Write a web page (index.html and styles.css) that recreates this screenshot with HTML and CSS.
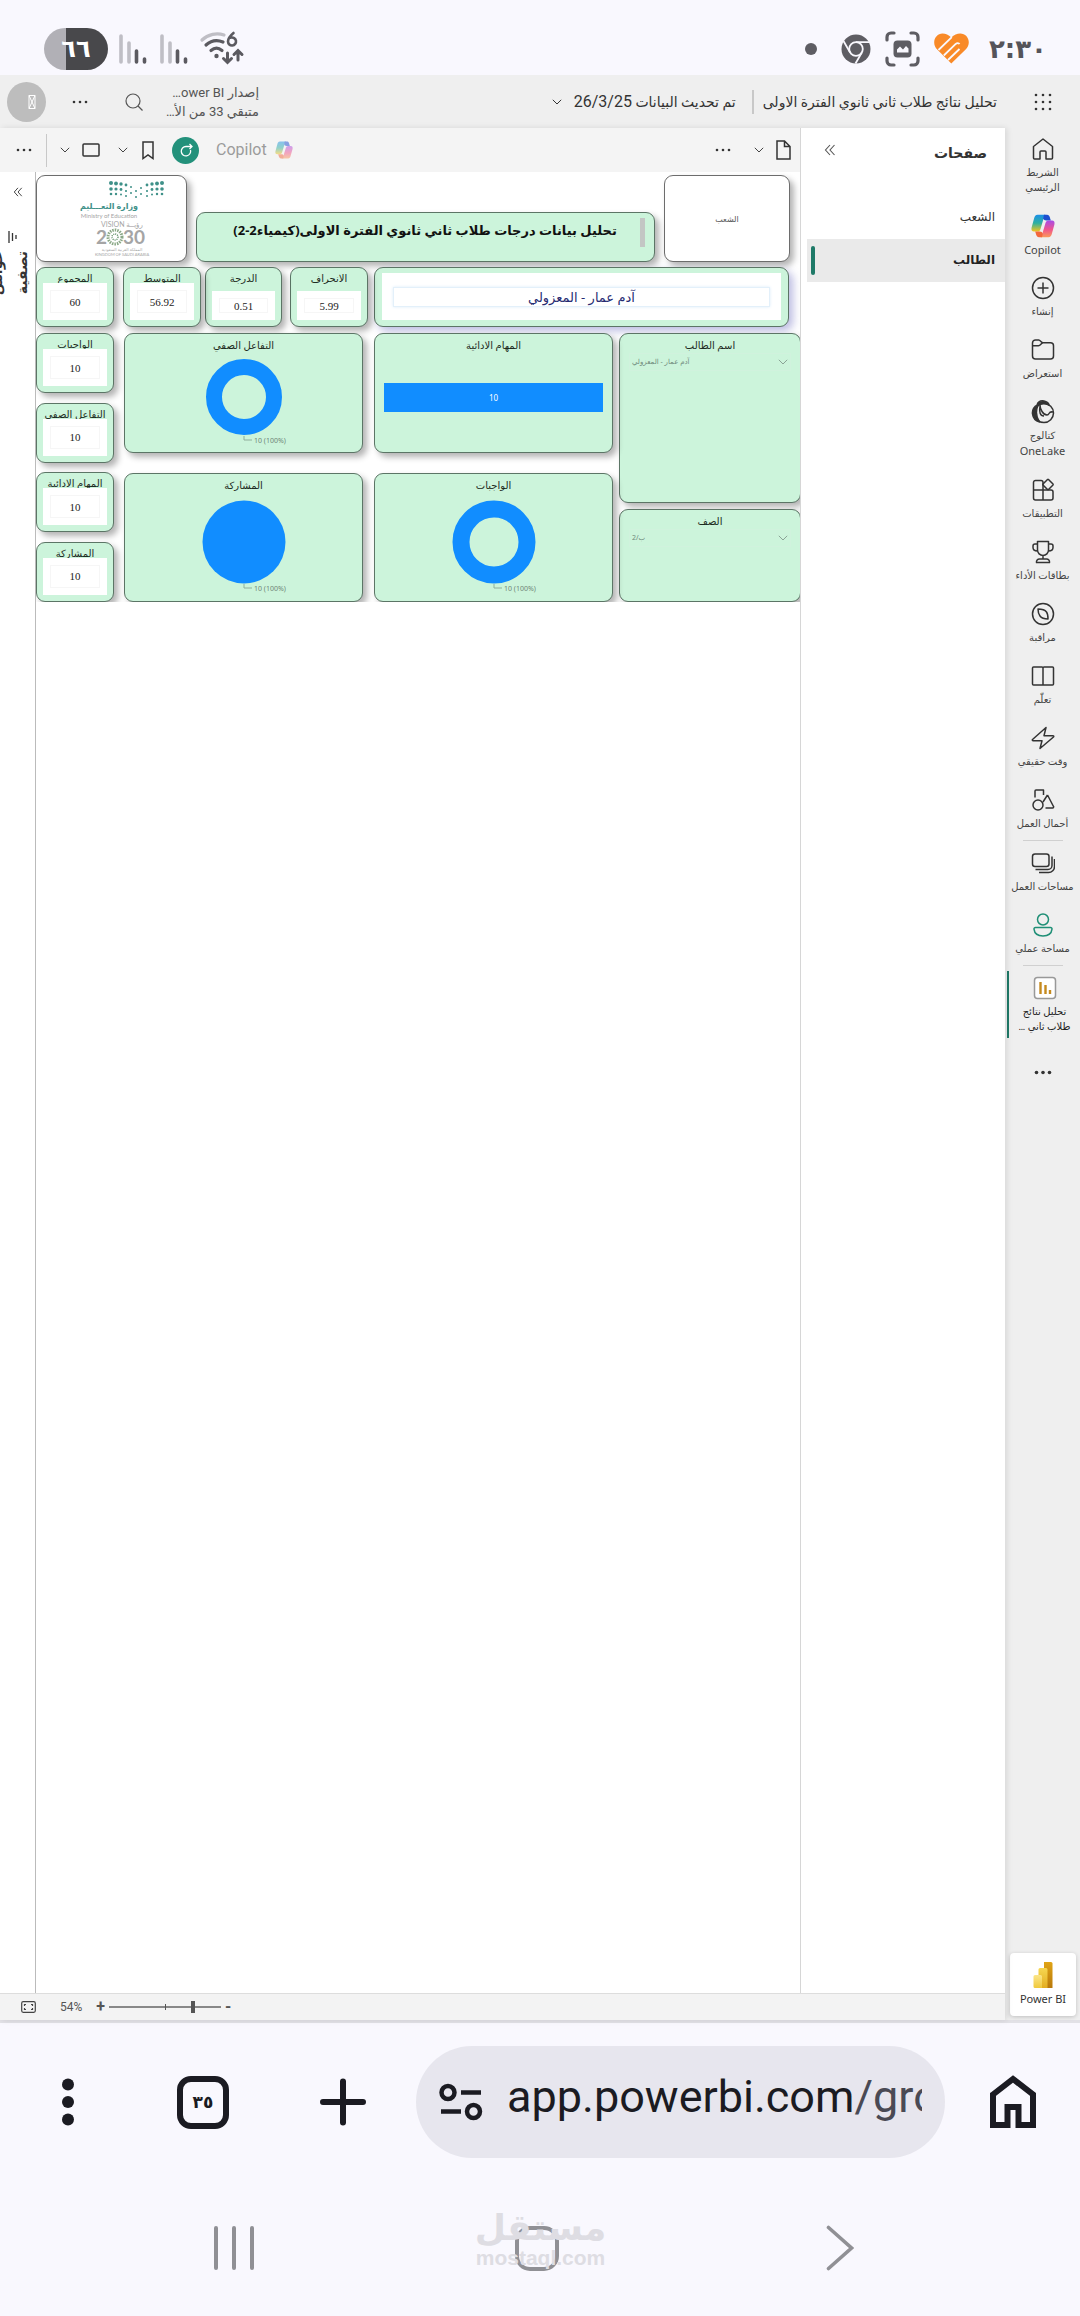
FILE: index.html
```html
<!DOCTYPE html>
<html lang="ar" dir="rtl">
<head>
<meta charset="utf-8">
<meta name="viewport" content="width=device-width, initial-scale=1">
<title>تحليل نتائج طلاب ثاني ثانوي الفترة الاولى - Power BI</title>
<link rel="stylesheet" href="styles.css">
</head>
<body>
<svg class="defs" aria-hidden="true">
  <defs>
    <linearGradient id="cpA" x1="0" y1="0" x2="0" y2="1"><stop offset="0" stop-color="#1b8fe8"/><stop offset=".5" stop-color="#2fb0a0"/><stop offset="1" stop-color="#f5c51c"/></linearGradient>
    <linearGradient id="cpB" x1="0" y1="0" x2="0" y2="1"><stop offset="0" stop-color="#a74be8"/><stop offset=".55" stop-color="#f0568c"/><stop offset="1" stop-color="#fb9a5a"/></linearGradient>
    <linearGradient id="pb1" x1="0" y1="0" x2="0" y2="1"><stop offset="0" stop-color="#e0a416"/><stop offset="1" stop-color="#b8780a"/></linearGradient>
    <linearGradient id="pb2" x1="0" y1="0" x2="0" y2="1"><stop offset="0" stop-color="#f6d751"/><stop offset="1" stop-color="#e3ad20"/></linearGradient>
    <linearGradient id="pb3" x1="0" y1="0" x2="0" y2="1"><stop offset="0" stop-color="#fbe589"/><stop offset="1" stop-color="#f0c93c"/></linearGradient>
    <symbol id="copilot" viewBox="0 0 24 24">
      <path d="M14 .8H6.5C4.600.8 3.700 2.200 3.200 4L.6 13.500C0 16 1 17.500 3 17.500h3.500c1.700 0 2.500-1 3-2.600L12.600 4.600c.6-2 1-3 3.200-3z" fill="url(#cpA)"/>
      <path d="M13 .8h3c1.600 0 2.300.9 2.800 2.400l1 3.300h-4.500c-1.700 0-2.600-.7-3.100-2.200z" fill="#1d4fd0"/>
      <path d="M10 23.200h7.500c1.900 0 2.800-1.400 3.300-3.200l2.600-9.500c.6-2.500-.4-4-2.400-4h-3.500c-1.700 0-2.500 1-3 2.600l-3.100 10.300c-.6 2-1 3-3.200 3z" fill="url(#cpB)"/>
      <path d="M11 23.200H8c-1.600 0-2.300-.9-2.800-2.400l-1-3.300h4.500c1.700 0 2.600.7 3.100 2.200z" fill="#f2683c"/>
    </symbol>
    <symbol id="chev" viewBox="0 0 10 6"><path d="M.8.8 5 5 9.200.8" fill="none" stroke="currentColor" stroke-width="1"/></symbol>
    <symbol id="more" viewBox="0 0 16 4"><circle cx="2" cy="2" r="1.300"/><circle cx="8" cy="2" r="1.300"/><circle cx="14" cy="2" r="1.300"/></symbol>
    <symbol id="bars" viewBox="0 0 28 32"><g fill="none" stroke-linecap="round" stroke-width="3.600"><path d="M2 3v26M10 10v19" stroke="#bfbec5"/><path d="M17.500 18v11M25.500 26v3" stroke="#5b5a60"/></g></symbol>
    <symbol id="dbl" viewBox="0 0 12 12"><path d="M6 1 1.500 6 6 11M10.500 1 6 6l4.500 5" fill="none" stroke="currentColor" stroke-width="1.100"/></symbol>
  </defs>
</svg>

<header class="status" dir="ltr">
  <div class="status-side">
    <span class="battery">٦٦</span>
    <svg width="28" height="32" class="sig1"><use href="#bars"/></svg>
    <svg width="28" height="32" class="sig2"><use href="#bars"/></svg>
    <svg width="46" height="36" viewBox="0 0 46 36" fill="none" stroke-linecap="round" stroke-width="3.200">
      <path d="M3 9C9 3 18 1.500 25 4" stroke="#bfbec5"/>
      <path d="M7 14c5-4.500 11-5.500 17-3M12 19.500c3.500-3 7.500-3 11 0" stroke="#5b5a60"/>
      <circle cx="17.500" cy="25" r="2.200" fill="#5b5a60"/>
      <path d="M28.500 22v9m-4-3.500 4 4 4-4M39 29v-9m-4 3.500 4-4 4 4" stroke="#5b5a60" stroke-width="3"/>
      <path d="M34.500 2c-3 2.500-5.500 5.500-5.500 8.500a4 4 0 1 0 3-3.900" stroke="#5b5a60" stroke-width="2.600"/>
    </svg>
  </div>
  <div class="status-side status-right">
    <span class="dot"></span>
    <svg width="30" height="30" viewBox="0 0 30 30"><circle cx="15" cy="15" r="14.500" fill="#5e5d63"/><g fill="none" stroke="#f9f8fe" stroke-width="1.800"><circle cx="15" cy="15" r="6.800"/><path d="M15 8.200h13.500M9 18.400 2.500 7M20.800 18.600 14.500 29.500"/></g></svg>
    <svg width="35" height="36" viewBox="0 0 35 36" fill="none" stroke="#5e5d63" stroke-width="3.200" stroke-linecap="round"><path d="M2 9V6a4 4 0 0 1 4-4h3M26 2h3a4 4 0 0 1 4 4v3M33 27v3a4 4 0 0 1-4 4h-3M9 34H6a4 4 0 0 1-4-4v-3"/><rect x="8.500" y="9.500" width="18" height="17" rx="4" fill="#5e5d63" stroke="none"/><path d="M12 21.500v-3l3-3 3 3 3-3.500 2.500 2.500v4z" fill="#f9f8fe" stroke="none"/></svg>
    <svg width="35" height="31" viewBox="0 0 35 31">
      <path d="M8.500.5c3.300 0 6 1.300 8.800 4C20 1.800 23 .5 26.200.5c5 0 8.600 4 8.600 8.800 0 3-1.200 5.200-3.200 7.200L17.300 30.500 3.200 16.500C1.200 14.500.2 12.300.2 9.500.2 4.500 3.800.5 8.500.5z" fill="#f98a28"/>
      <path d="M4.500 17 17.800 4.200M9.800 22.500 21.500 11.200c1.600-1.500 3.200-1.500 4 0M14 27 25.500 16" fill="none" stroke="#f9f8fe" stroke-width="1.800"/>
    </svg>
    <time class="clock">٢:٣٠</time>
  </div>
</header>

<div class="app">
  <header class="topbar">
    <button class="waffle" aria-label="التطبيقات"><svg width="18" height="18" viewBox="0 0 18 18" fill="#333"><circle cx="2" cy="2" r="1.300"/><circle cx="9" cy="2" r="1.300"/><circle cx="16" cy="2" r="1.300"/><circle cx="2" cy="9" r="1.300"/><circle cx="9" cy="9" r="1.300"/><circle cx="16" cy="9" r="1.300"/><circle cx="2" cy="16" r="1.300"/><circle cx="9" cy="16" r="1.300"/><circle cx="16" cy="16" r="1.300"/></svg></button>
    <h1 class="doc-title">تحليل نتائج طلاب ثاني ثانوي الفترة الاولى</h1>
    <span class="vr"></span>
    <button class="updated"><span>تم تحديث البيانات <bdi>26/3/25</bdi></span><svg width="10" height="6"><use href="#chev"/></svg></button>
    <p class="trial">إصدار ower BI…<br>متبقي 33 من الأ…</p>
    <button class="search" aria-label="بحث"><svg width="18" height="18" viewBox="0 0 18 18" fill="none" stroke="#555" stroke-width="1.200"><circle cx="8" cy="8" r="7"/><path d="m13 13 4.500 4.500"/></svg></button>
    <button class="top-more" aria-label="المزيد"><svg width="16" height="4" fill="#333"><use href="#more"/></svg></button>
    <button class="avatar" aria-label="الحساب"><svg width="8" height="14" viewBox="0 0 8 14" fill="none" stroke="#fff" stroke-width="1"><path d="M1 .5h6v13H1zM1 .5l6 13M7 .5l-6 13"/></svg></button>
  </header>

  <div class="shell">
    <nav class="rail">
      <a href="#" class="item"><svg viewBox="0 0 24 24"><path d="M2.500 9.500 12 2l9.500 7.500V21a1 1 0 0 1-1 1H15v-7a1 1 0 0 0-1-1h-4a1 1 0 0 0-1 1v7H3.500a1 1 0 0 1-1-1z"/></svg>الشريط<br>الرئيسي</a>
      <a href="#" class="item latin"><svg viewBox="0 0 24 24" class="plain"><use href="#copilot"/></svg>Copilot</a>
      <a href="#" class="item"><svg viewBox="0 0 24 24"><circle cx="12" cy="12" r="10.500"/><path d="M12 6.500v11M6.500 12h11"/></svg>إنشاء</a>
      <a href="#" class="item"><svg viewBox="0 0 24 24"><path d="M1.500 7.500V5a3 3 0 0 1 3-3h3.200c1.600 0 2.800 2.800 4.300 2.800h7.500a3 3 0 0 1 3 3V18a3 3 0 0 1-3 3h-15a3 3 0 0 1-3-3z"/><path d="M1.500 7.800h6c2 0 2.700-3 4.500-3"/></svg>استعراض</a>
      <a href="#" class="item"><svg viewBox="0 0 24 24"><circle cx="13" cy="13" r="9.500"/><path d="M7 5C3 6 1 10 1.500 14s3 7 7 8C5 17 5 10 7 5zM6 5c1-3 4-4.500 7-4s5 2.500 5 4c-4-2-8-2-12 0z" fill="#333"/><path d="M9 5c0 4 3 10 7 10 3 0 1-4 6-3M9 6c-1 6 0 10 4 10"/></svg>كتالوج<br><span class="latin">OneLake</span></a>
      <a href="#" class="item"><svg viewBox="0 0 24 24"><path d="M12 12V4.500a2 2 0 0 0-2-2H4.500a2 2 0 0 0-2 2V20a2 2 0 0 0 2 2H20a2 2 0 0 0 2-2v-6a2 2 0 0 0-2-2zM2.500 12H12v10"/><path d="m17.500 1.500 4.500 4.500a.8.800 0 0 1 0 1l-4.500 4.500a.8.800 0 0 1-1 0L12 7a.8.800 0 0 1 0-1l4.500-4.500a.8.800 0 0 1 1 0z"/></svg>التطبيقات</a>
      <a href="#" class="item"><svg viewBox="0 0 24 24"><path d="M6.500 1.500h11V10a5.500 5.500 0 0 1-11 0zM6.500 4H4a2 2 0 0 0-2 2v1.500C2 10 4 11 6.500 11M17.500 4H20a2 2 0 0 1 2 2v1.500c0 2.500-2 3.500-4.500 3.500M12 15.500V19M8.500 19h7a3 3 0 0 1 3 3.500h-13a3 3 0 0 1 3-3.500z"/></svg>بطاقات الأداء</a>
      <a href="#" class="item"><svg viewBox="0 0 24 24"><circle cx="12" cy="12" r="10.500"/><path d="M7 7c4 0 7 1 8.500 3S17 14 17 17c-4 0-6.500-1-8-3S7 10 7 7z"/></svg>مراقبة</a>
      <a href="#" class="item"><svg viewBox="0 0 24 24"><path d="M12 4v17M12 4a1 1 0 0 0-1-1H2.500a1 1 0 0 0-1 1v16a1 1 0 0 0 1 1h19a1 1 0 0 0 1-1V4a1 1 0 0 0-1-1H13a1 1 0 0 0-1 1z"/></svg>تعلّم</a>
      <a href="#" class="item"><svg viewBox="0 0 24 24"><path d="M15 1.500 1.500 13.500c-.5.500 0 1.200.6 1.200H11L9 22.500 22.500 11c.6-.6.200-1.300-.6-1.300H13z"/></svg>وقت حقيقي</a>
      <a href="#" class="item"><svg viewBox="0 0 24 24"><circle cx="7" cy="17" r="5"/><path d="M4 9.500V3a1 1 0 0 1 1-1h7.500v5M16.500 7l6 11.500a1 1 0 0 1-.8 1.500h-7.200M16.500 7 12 14"/></svg>أحمال العمل</a>
      <hr>
      <a href="#" class="item"><svg viewBox="0 0 24 24"><rect x="1.500" y="3" width="16.500" height="12.500" rx="2.500"/><path d="M4.500 18.500H17a4 4 0 0 0 4-4V5.500M8 21.500h9.500a6 6 0 0 0 6-6V8"/></svg>مساحات العمل</a>
      <a href="#" class="item"><svg viewBox="0 0 24 24" class="green"><circle cx="12" cy="6.500" r="5.500"/><path d="M4.500 14.500h15a1.500 1.500 0 0 1 1.500 1.700C20.500 20.500 17 23 12 23s-8.500-2.500-9-6.800a1.500 1.500 0 0 1 1.500-1.700z"/></svg>مساحة عملي</a>
      <hr>
      <a href="#" class="item current"><svg viewBox="0 0 24 24" class="plain"><rect x="1.500" y="1.500" width="21" height="21" rx="3" fill="#fff" stroke="#999"/><path d="M7.500 6v12M12.500 9v9M17 14v4" stroke="#c58a1e" stroke-width="2.400" fill="none"/></svg>تحليل نتائج<br>طلاب ثاني …</a>
      <button class="rail-more" aria-label="المزيد"><svg width="18" height="5" fill="#333" viewBox="0 0 18 5"><circle cx="2.500" cy="2.500" r="1.800"/><circle cx="9" cy="2.500" r="1.800"/><circle cx="15.500" cy="2.500" r="1.800"/></svg></button>
      <a href="#" class="product"><svg width="22" height="28" viewBox="0 0 22 28"><path d="M12 1h7a1.500 1.500 0 0 1 1.500 1.500V27H12z" fill="url(#pb1)"/><path d="M6.500 8.500A1.500 1.500 0 0 1 8 7h6a1.500 1.500 0 0 1 1.500 1.500V27h-9z" fill="url(#pb2)"/><path d="M1.500 15.500A1.500 1.500 0 0 1 3 14h5.500a1.500 1.500 0 0 1 1.500 1.500V27H3a1.500 1.500 0 0 1-1.500-1.500z" fill="url(#pb3)"/></svg>Power BI</a>
    </nav>

    <div class="work">
      <div class="work-row">
        <aside class="pages">
          <div class="pages-head"><h2>صفحات</h2><button aria-label="طي"><svg width="12" height="12"><use href="#dbl"/></svg></button></div>
          <a href="#" class="page-link">الشعب</a>
          <a href="#" class="page-link selected">الطالب</a>
        </aside>

        <div class="stage">
          <div class="toolbar">
            <button class="t-file" aria-label="ملف"><svg width="15" height="20" viewBox="0 0 15 20" fill="none" stroke="#333" stroke-width="1.500"><path d="M1 1h7.500L14 6.500V19H1zM8.500 1v5.500H14"/></svg><svg width="10" height="6"><use href="#chev"/></svg></button>
            <button class="t-more" aria-label="المزيد"><svg width="16" height="4" fill="#333"><use href="#more"/></svg></button>
            <button class="t-copilot"><svg width="18" height="18"><use href="#copilot"/></svg>Copilot</button>
            <button class="t-reset" aria-label="إعادة تعيين"><svg width="14" height="14" viewBox="0 0 14 14" fill="none" stroke="#fff" stroke-width="1.300"><path d="M13 3.500H7A4.700 4.700 0 1 0 11.500 7M10.500 1 13 3.500 10.500 6"/></svg></button>
            <button class="t-mark" aria-label="إشارات مرجعية"><svg width="12" height="19" viewBox="0 0 12 19" fill="none" stroke="#333" stroke-width="1.500"><path d="M1 1h10v16.500L6 14l-5 3.500z"/></svg><svg width="10" height="6"><use href="#chev"/></svg></button>
            <button class="t-view" aria-label="عرض"><svg width="18" height="14" viewBox="0 0 18 14" fill="none" stroke="#333" stroke-width="1.500"><rect x="1" y="1" width="16" height="12" rx="1"/></svg><svg width="10" height="6"><use href="#chev"/></svg></button>
            <span class="vr"></span>
            <button class="t-last" aria-label="المزيد"><svg width="16" height="4" fill="#333"><use href="#more"/></svg></button>
          </div>

          <div class="canvas-row">
            <main class="canvas">
              <div class="report">
                <div class="row-top">
                  <button class="card white nav-card">الشعب</button>
                  <div class="card title-card"><span class="thumb"></span><h2>تحليل بيانات درجات طلاب ثاني ثانوي الفترة الاولى(كيمياء2-2)</h2></div>
                  <div class="card white logo-card">
                    <svg viewBox="0 0 151 87" width="151" height="87" direction="ltr">
                      <g fill="#3f9189">
                        <circle cx="75" cy="7" r="2"/><circle cx="80" cy="7.500" r="1.900"/><circle cx="85" cy="8" r="1.700"/><circle cx="90" cy="9" r="1.400"/><circle cx="95" cy="11" r="1"/><circle cx="75" cy="13" r="1.800"/><circle cx="80" cy="13" r="1.600"/><circle cx="85" cy="13.500" r="1.400"/><circle cx="90" cy="15" r="1.100"/><circle cx="95" cy="17" r="1"/><circle cx="75" cy="18" r="1.300"/><circle cx="80" cy="18" r="1.200"/><circle cx="85" cy="18.500" r="1"/><circle cx="90" cy="20" r="1"/><circle cx="100" cy="15" r="1"/><circle cx="100" cy="21" r="1"/>
                        <circle cx="126" cy="7" r="2"/><circle cx="121" cy="7.500" r="1.900"/><circle cx="116" cy="8" r="1.700"/><circle cx="111" cy="9" r="1.400"/><circle cx="105" cy="12" r="1"/><circle cx="126" cy="13" r="1.800"/><circle cx="121" cy="13" r="1.600"/><circle cx="116" cy="13.500" r="1.400"/><circle cx="111" cy="15" r="1.100"/><circle cx="105" cy="18" r="1"/><circle cx="126" cy="18" r="1.300"/><circle cx="121" cy="18" r="1.200"/><circle cx="116" cy="18.500" r="1"/><circle cx="111" cy="20" r="1"/>
                      </g>
                      <text x="73" y="33" class="lg-ar">وزارة التعـــليم</text>
                      <text x="73" y="42" class="lg-en">Ministry of Education</text>
                      <text x="86" y="51" class="lg-vis">VISION رؤيــة</text>
                      <text x="60" y="68" class="lg-num">2</text>
                      <text x="87" y="68" class="lg-num">30</text>
                      <circle cx="79" cy="61" r="7" fill="none" stroke="#8aa886" stroke-width="3" stroke-dasharray="1.500 1"/>
                      <circle cx="79" cy="61" r="3" fill="none" stroke="#5f8f66" stroke-width="1.400" stroke-dasharray="1 1"/>
                      <text x="86" y="75" class="lg-tiny">المملكة العربية السعودية</text>
                      <text x="86" y="80" class="lg-tiny">KINGDOM OF SAUDI ARABIA</text>
                    </svg>
                  </div>
                </div>

                <div class="row-kpi">
                  <div class="card name-card"><div class="name-box"><span>آدم عمار - المعزولي</span></div></div>
                  <div class="card kpi low dev"><h3>الانحراف</h3><div><span>5.99</span></div></div>
                  <div class="card kpi low deg"><h3>الدرجة</h3><div><span>0.51</span></div></div>
                  <div class="card kpi avg"><h3>المتوسط</h3><div><span>56.92</span></div></div>
                  <div class="card kpi sum"><h3>المجموع</h3><div><span>60</span></div></div>
                </div>

                <div class="row-body">
                  <div class="col slicers">
                    <div class="card slicer student"><label for="student">اسم الطالب</label><div class="pick"><select id="student"><option>آدم عمار - المعزولي</option></select><svg width="10" height="6"><use href="#chev"/></svg></div></div>
                    <div class="card slicer"><label for="klass">الصف</label><div class="pick"><select id="klass"><option>ب/2</option></select><svg width="10" height="6"><use href="#chev"/></svg></div></div>
                  </div>
                  <div class="col charts mid">
                    <div class="card chart"><h3>المهام الادائية</h3><div class="bar">10</div></div>
                    <div class="card chart tall"><h3>الواجبات</h3>
                      <svg width="84" height="96" viewBox="0 0 84 96"><circle cx="42" cy="42" r="33" fill="none" stroke="#118dff" stroke-width="17"/><path d="M42 84v4h8" class="lead"/><text x="52" y="91">10 (100%)</text></svg></div>
                  </div>
                  <div class="col charts far">
                    <div class="card chart"><h3>التفاعل الصفي</h3>
                      <svg width="76" height="88" viewBox="0 0 76 88"><circle cx="38" cy="38" r="30" fill="none" stroke="#118dff" stroke-width="16"/><path d="M38 77v4h8" class="lead"/><text x="48" y="84">10 (100%)</text></svg></div>
                    <div class="card chart tall"><h3>المشاركة</h3>
                      <svg width="84" height="96" viewBox="0 0 84 96"><circle cx="42" cy="42" r="41.500" fill="#118dff"/><path d="M42 84v4h8" class="lead"/><text x="52" y="91">10 (100%)</text></svg></div>
                  </div>
                  <div class="col kpis">
                    <div class="card kpi"><h3>الواجبات</h3><div><span>10</span></div></div>
                    <div class="card kpi"><h3>التفاعل الصفي</h3><div><span>10</span></div></div>
                    <div class="card kpi"><h3>المهام الادائية</h3><div><span>10</span></div></div>
                    <div class="card kpi"><h3>المشاركة</h3><div><span>10</span></div></div>
                  </div>
                </div>
              </div>
            </main>
            <aside class="filters">
              <button aria-label="توسيع"><svg width="10" height="12" viewBox="0 0 12 12"><use href="#dbl"/></svg></button>
              <svg width="9" height="12" viewBox="0 0 9 12" fill="none" stroke="#333" stroke-width="1.300"><path d="M1 0v12M4.500 2v8M8 4v4"/></svg>
              <h2>عوامل<br>تصفية</h2>
            </aside>
          </div>
        </div>
      </div>

      <footer class="zoombar">
        <span class="minus">-</span>
        <input type="range" min="0" max="100" value="24" aria-label="تكبير">
        <span class="plus">+</span>
        <output>54%</output>
        <button aria-label="ملاءمة"><svg width="15" height="12" viewBox="0 0 15 12" fill="none" stroke="#444" stroke-width="1.200"><rect x=".7" y=".7" width="13.600" height="10.600" rx="1.500"/><path d="M3.500 5V3.500H5M10 3.500h1.500V5M11.500 7v1.500H10M5 8.500H3.500V7"/></svg></button>
      </footer>
    </div>
  </div>
</div>

<div class="browser" dir="ltr">
  <button class="b-menu" aria-label="القائمة"><svg width="12" height="48" viewBox="0 0 12 48" fill="#1b1b22"><circle cx="6" cy="6.500" r="6"/><circle cx="6" cy="24" r="6"/><circle cx="6" cy="41.500" r="6"/></svg></button>
  <button class="b-tabs">٣٥</button>
  <button class="b-new" aria-label="علامة تبويب جديدة"><svg width="46" height="48" viewBox="0 0 46 48" stroke="#1b1b22" stroke-width="6" stroke-linecap="round"><path d="M23 3.500v41M3 24h40"/></svg></button>
  <div class="url">
    <svg width="44" height="38" viewBox="0 0 44 38" fill="none" stroke="#1b1b22" stroke-width="4.500"><circle cx="9" cy="9.500" r="6.500"/><circle cx="34.500" cy="28.500" r="6.500"/><path d="M22 9.500h20M2 28.500h20"/></svg>
    <span class="url-text">app.powerbi.com<i>/groups</i></span>
  </div>
  <button class="b-home" aria-label="الصفحة الرئيسية"><svg width="46" height="54" viewBox="0 0 46 54" fill="none" stroke="#1b1b22" stroke-width="6"><path d="M3 19.500 23 4l20 15.500V50H28.500V32h-11v18H3z"/></svg></button>
</div>

<nav class="sysnav" dir="ltr">
  <button aria-label="التطبيقات الأخيرة"><svg width="40" height="44" viewBox="0 0 40 44" stroke="#909095" stroke-width="4" stroke-linecap="round"><path d="M2 2v40M20 2v40M38 2v40"/></svg></button>
  <div class="home-slot">
    <p class="mark"><b>مستقل</b><span>mostaql.com</span></p>
    <button aria-label="الشاشة الرئيسية"></button>
  </div>
  <button aria-label="رجوع"><svg width="28" height="46" viewBox="0 0 28 46" fill="none" stroke="#909095" stroke-width="3.600" stroke-linecap="round"><path d="m2.500 2.500 23 20.500-23 20.500"/></svg></button>
</nav>
</body>
</html>
```
FILE: styles.css
```css
* { box-sizing: border-box; }
body {
  margin: 0;
  min-height: 100vh;
  display: flex;
  flex-direction: column;
  background: #f9f8fe;
  color: #333;
  font: 13px/16px Roboto, "DejaVu Sans", sans-serif;
}
h1, h2, h3, p { margin: 0; font-weight: 400; }
button { margin: 0; padding: 0; border: 0; background: none; color: inherit; font: inherit; display: flex; align-items: center; justify-content: center; }
a { color: inherit; text-decoration: none; }
svg { display: block; flex: none; }
.defs { position: absolute; width: 0; height: 0; }
.vr { width: 2px; background: #c8c8c8; }
.latin { font-family: "Noto Sans", sans-serif; }

/* phone status bar */
.status { height: 75px; padding: 22px 33px 0 44px; display: flex; justify-content: space-between; }
.status-side { display: flex; align-items: center; }
.battery { width: 64px; height: 42px; border-radius: 22px; background: linear-gradient(90deg, #b1b0b6 35%, #48484b 35%); color: #fff; font: bold 24px/42px "DejaVu Sans", sans-serif; text-align: center; }
.sig1 { margin-left: 11px; }
.sig2 { margin: 0 11px 0 13px; }
.status-right { gap: 14px; }
.dot { width: 12px; height: 12px; margin-right: 10px; border-radius: 50%; background: #5e5d63; }
.clock { margin-left: 6px; color: #55545a; font: bold 26px/40px "DejaVu Sans", sans-serif; }

/* application frame */
.app { flex: 1; display: flex; flex-direction: column; background: #efefef; border-bottom: 3px solid #e2e1e6; }
.topbar { height: 53px; padding: 0 28px 0 7px; display: flex; align-items: center; }
.waffle { width: 18px; }
.doc-title { margin-right: 37px; font-size: 14px; line-height: 24px; white-space: nowrap; }
.topbar .vr { height: 24px; margin: 0 9px 0 16px; }
.updated { gap: 12px; font-size: 14px; white-space: nowrap; }
.updated bdi { font-size: 16px; }
.trial { margin-right: auto; width: 86px; font-size: 13px; line-height: 19px; color: #555; white-space: nowrap; }
.search { margin-right: 30px; }
.top-more { margin: 0 37px 0 24px; }
.top-more { margin-left: 26px; }
.avatar { width: 39px; height: 40px; border-radius: 50%; background: #bdbdbd; }
.avatar svg { margin-left: 10px; }
.shell { flex: 1; display: flex; }

/* navigation rail */
.rail { width: 75px; flex: none; padding-top: 4px; display: flex; flex-direction: column; }
.item { padding: 5px 0 14px; display: block; text-align: center; font-size: 10px; line-height: 15px; color: #444; white-space: nowrap; }
.item svg { width: 24px; height: 24px; margin: 0 auto 4px; fill: none; stroke: #333; stroke-width: 1.500; stroke-linejoin: round; }
.item svg.plain { stroke: none; }
.item svg.green { stroke: #1f8f76; }
.item.latin, .item .latin { font-size: 11px; }
.rail hr { width: 40px; height: 1px; margin: -5px auto 5px; border: 0; background: #d0d0d0; }
.current { margin-left: 2px; padding-bottom: 4px; border-left: 2px solid #1f7a68; color: #222; }
.rail-more { margin-top: 31px; height: 6px; }
.product { margin: auto 4px 4px 5px; height: 63px; padding-top: 8px; border-radius: 4px; background: #fff; box-shadow: 0 1px 4px rgba(0, 0, 0, .2); display: flex; flex-direction: column; align-items: center; gap: 1px; font: 11px/18px "Noto Sans", sans-serif; direction: ltr; }

/* work area */
.work { flex: 1; min-width: 0; display: flex; flex-direction: column; box-shadow: 2px 0 6px rgba(0, 0, 0, .1); }
.work-row { flex: 1; display: flex; background: #fff; }
.pages { width: 205px; flex: none; border-left: 1px solid #d6d6d6; }
.pages-head { height: 68px; padding: 15px 18px 0 23px; display: flex; align-items: flex-start; justify-content: space-between; }
.pages-head h2 { font-size: 14px; line-height: 20px; font-weight: 700; }
.pages-head button { margin-top: 1px; color: #555; }
.page-link { display: block; margin-left: 6px; padding: 0 10px; font-size: 12px; line-height: 43px; }
.selected { position: relative; background: #eaeaea; font-weight: 700; color: #222; }
.selected::after { content: ""; position: absolute; left: 4px; top: 7px; bottom: 7px; width: 4px; border-radius: 2px; background: #1f7a68; }
.stage { flex: 1; min-width: 0; display: flex; flex-direction: column; }
.toolbar { height: 44px; padding: 0 9px 0 16px; display: flex; align-items: center; background: #f4f4f4; color: #444; }
.toolbar button { gap: 12px; }
.t-more { margin-right: 23px; }
.t-copilot { margin-right: auto; opacity: .5; font-size: 16px; }
.toolbar .t-copilot { gap: 8px; }
.t-reset { width: 27px; height: 27px; margin: 0 17px 0 18px; border-radius: 50%; background: #23917b; }
.toolbar .t-mark { gap: 14px; }
.t-view { margin-right: 18px; }
.toolbar .vr { height: 33px; width: 1px; margin: 0 13px 0 14px; }
.canvas-row { flex: 1; display: flex; }
.canvas { flex: 1; min-width: 0; }
.filters { width: 36px; flex: none; border-right: 1px solid #bbb; overflow: hidden; display: flex; flex-direction: column; align-items: center; padding-top: 14px; }
.filters > svg { margin: 33px 0 8px 8px; align-self: flex-end; }
.filters h2 { width: 50px; flex: none; align-self: flex-start; writing-mode: vertical-rl; transform: rotate(180deg); font-size: 14px; line-height: 25px; font-weight: 700; }

/* report */
.report { padding-top: 3px; overflow: hidden; display: flex; flex-direction: column; font-family: "Noto Sans", "DejaVu Sans", sans-serif; }
.card { border: 1px solid #5c7566; border-radius: 9px; background: #ccf4db; box-shadow: 4px 4px 6px rgba(0, 0, 0, .3); min-width: 0; overflow: hidden; }
.card.white { background: #fff; border-color: #6d6d6d; }
.card h3, .slicer label { font-size: 10px; line-height: 22px; text-align: center; color: #1d2b22; white-space: nowrap; }
.row-top { display: grid; grid-template-columns: 126fr 458fr 151fr; column-gap: 9px; padding-right: 10px; height: 87px; align-items: end; }
.nav-card { height: 87px; font-size: 8px; color: #555; }
.title-card { height: 50px; padding: 5px 9px 5px 13px; display: flex; }
.title-card h2 { flex: 1; font-size: 13px; line-height: 24px; font-weight: 700; color: #111; text-align: center; white-space: nowrap; }
.thumb { width: 5px; height: 29px; background: #c3c6c4; }
.logo-card { height: 87px; display: flex; justify-content: center; }
.logo-card text { text-anchor: middle; fill: #a5a5a5; font-family: Lato, "DejaVu Sans", sans-serif; }
.logo-card .lg-ar { fill: #3f9189; font-size: 8px; font-weight: 700; }
.logo-card .lg-en { font-size: 6px; }
.logo-card .lg-vis { font-size: 7px; }
.logo-card .lg-num { font-size: 19px; font-weight: 700; text-anchor: start; }
.logo-card .lg-tiny { font-size: 4px; }
.row-kpi { margin-top: 5px; height: 60px; display: grid; padding-right: 11px; grid-template-columns: 415fr 6px 78fr 8px 77fr 4px 78fr 9px 78fr; grid-template-areas: "name . dev . deg . avg . sum"; }
.name-card { grid-area: name; padding: 5px 7px 6px; box-shadow: 4px 4px 8px rgba(60, 60, 170, .35); }
.name-box { height: 100%; padding: 14px 11px; background: #fff; }
.name-box span { display: block; height: 20px; text-align: center; border: 1px solid #e3f0fa; box-shadow: 0 0 3px #dcecfa; font-size: 13px; line-height: 18px; color: #262b72; }
.dev { grid-area: dev; }
.deg { grid-area: deg; }
.avg { grid-area: avg; }
.sum { grid-area: sum; }
.kpi { height: 60px; padding: 0 6px 6px; display: flex; flex-direction: column; }
.kpi h3 { height: 15px; line-height: 20px; overflow: hidden; flex: none; }
.kpi.low h3 { height: 23px; }
.kpi div { flex: 1; padding: 7px; background: #fff; display: flex; }
.kpi span { flex: 1; border: 1px solid #f6f6f6; display: flex; align-items: center; justify-content: center; font: 11px/12px "Liberation Serif", serif; color: #222; }
.row-body { margin-top: 6px; display: flex; height: 269px; }
.col { display: flex; flex-direction: column; justify-content: space-between; min-width: 0; }
.slicers { flex: 182; margin-right: -1px; gap: 6px; }
.charts { flex: 239; }
.mid { margin: 0 6px 0 11px; }
.far { margin-left: 10px; }
.kpis { flex: 78; }
.slicer { flex: 1; padding: 0 9px; display: flex; flex-direction: column; }
.slicer.student { flex: none; height: 170px; }
.pick { position: relative; height: 18px; margin-top: -3px; border: 1px solid #d0f2dd; color: #8aa396; display: flex; align-items: center; direction: ltr; }
.pick select { width: 100%; height: 16px; padding: 0 2px; border: 0; background: none; appearance: none; font: 7px/16px "Noto Sans", "DejaVu Sans", sans-serif; color: #6f8a7b; text-align: left; }
.pick svg { position: absolute; right: 2px; }
.chart { height: 120px; display: flex; flex-direction: column; align-items: center; }
.chart.tall { height: 129px; }
.chart svg { margin-top: 3px; overflow: visible; direction: ltr; }
.chart.tall svg { margin-top: 4px; }
.chart text { font-size: 7px; fill: #6e8577; }
.lead { fill: none; stroke: #8fae9c; stroke-width: 1; }
.bar { align-self: stretch; margin: 27px 9px 0; height: 29px; background: #118dff; color: #fff; font-size: 8px; line-height: 29px; text-align: center; }

/* zoom strip */
.zoombar { height: 27px; padding: 0 21px; border-top: 1px solid #ddd; background: #f3f3f3; display: flex; align-items: center; justify-content: flex-end; color: #555; font-size: 12px; white-space: nowrap; }
.zoombar input { width: 112px; height: 14px; margin: 0 4px; appearance: none; flex: none; background: linear-gradient(#555, #555) center / 1px 6px no-repeat, linear-gradient(#888, #888) center / 100% 2px no-repeat; }
.zoombar input::-webkit-slider-thumb { appearance: none; width: 4px; height: 12px; background: #555; }
.plus, .minus { font-size: 16px; font-weight: 700; }
.zoombar output { margin: 0 14px 0 24px; }

/* browser bottom bar */
.browser { height: 173px; padding: 23px 44px 38px 62px; display: flex; align-items: center; }
.b-tabs { width: 52px; height: 53px; margin-left: 103px; border: 6px solid #1b1b22; border-radius: 14px; font: bold 17px/20px "DejaVu Sans", sans-serif; color: #1b1b22; }
.b-new { margin: 0 50px 0 91px; }
.url { flex: 1; min-width: 0; height: 112px; padding: 0 23px; border-radius: 58px; background: #e7e6ee; display: flex; align-items: center; gap: 24px; }
.url-text { flex: 1; overflow: hidden; white-space: nowrap; font: 45px/60px Roboto, sans-serif; color: #1b1b22; padding-bottom: 10px; }
.url-text i { font-style: normal; color: #4a4a54; }
.b-home { margin-left: 45px; }

/* system navigation */
.sysnav { height: 120px; padding: 0 226px 16px 214px; display: flex; align-items: center; justify-content: space-between; }
.home-slot { position: relative; margin-right: 7px; display: flex; justify-content: center; }
.home-slot button { width: 44px; height: 45px; border: 4px solid #909095; border-radius: 15px; }
.mark { position: absolute; top: -18px; padding-left: 8px; display: flex; flex-direction: column; align-items: center; color: #dedde3; direction: rtl; }
.mark b { font: bold 36px/40px "DejaVu Sans", sans-serif; }
.mark span { font: bold 21px/20px "Liberation Sans", sans-serif; }
```
